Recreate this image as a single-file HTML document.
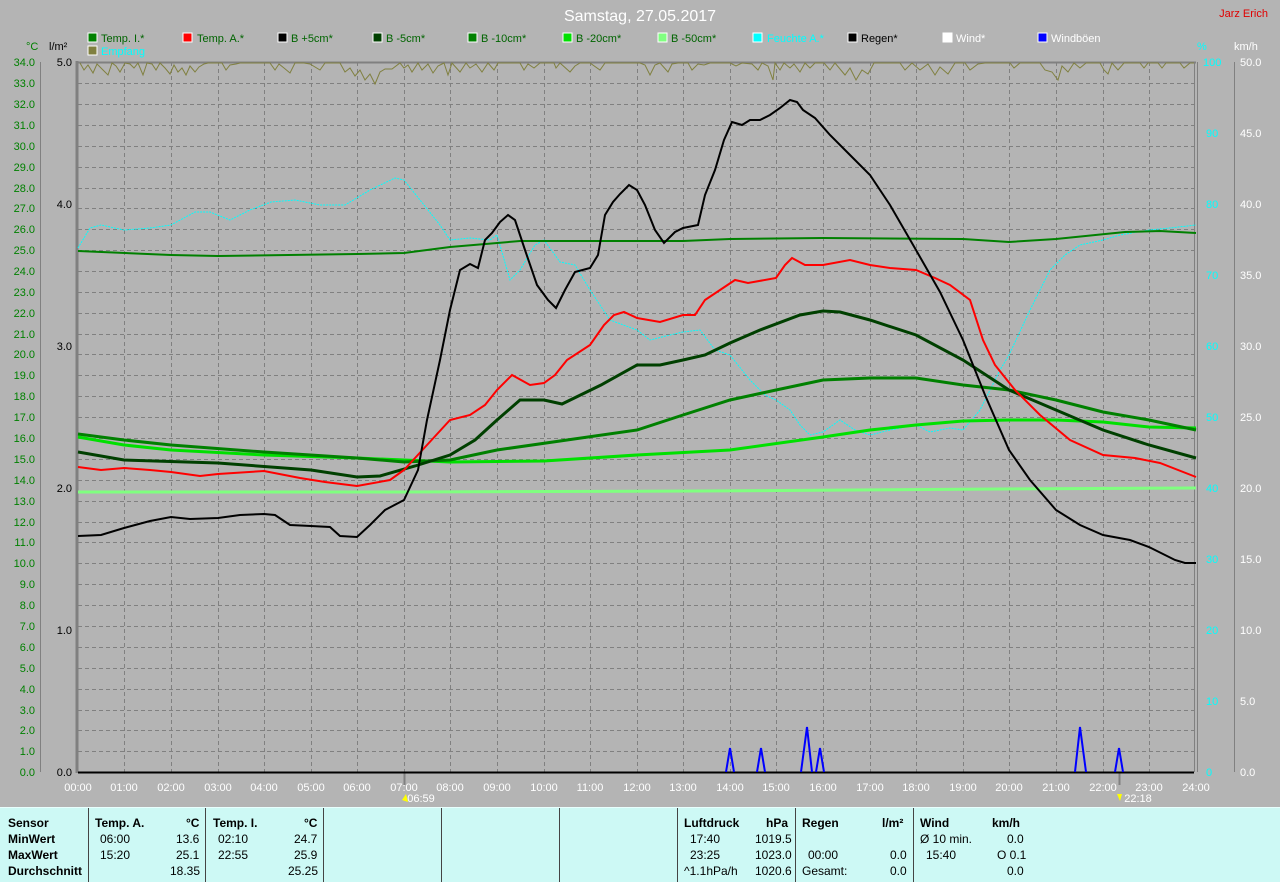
<!DOCTYPE html>
<html><head><meta charset="utf-8"><style>
body{margin:0;width:1280px;height:881px;background:#b4b4b4;overflow:hidden;font-family:"Liberation Sans",sans-serif}
svg{position:absolute;left:0;top:0}
.tbl{position:absolute;left:0;top:807px;width:1280px;height:74px;background:#cdf9f5;border-top:1px solid #e8fffd}
.tbl div{position:absolute;font-size:12px;color:#000}
.b{font-weight:bold}
.sep{position:absolute;top:0;width:1px;height:74px;background:#444}
</style></head><body>
<svg width="1280" height="807" font-family="Liberation Sans, sans-serif">
<text x="640" y="21" fill="#fff" font-size="16" text-anchor="middle">Samstag, 27.05.2017</text>
<text x="1268" y="17" fill="#e00000" font-size="11" text-anchor="end">Jarz Erich</text>
<g font-size="11">
<rect x="88" y="33" width="9" height="9" fill="#008000" stroke="#fff"/><text x="101" y="42" fill="#006400">Temp. I.*</text>
<rect x="183" y="33" width="9" height="9" fill="#f00" stroke="#fff"/><text x="197" y="42" fill="#006400">Temp. A.*</text>
<rect x="278" y="33" width="9" height="9" fill="#000" stroke="#fff"/><text x="291" y="42" fill="#006400">B +5cm*</text>
<rect x="373" y="33" width="9" height="9" fill="#004000" stroke="#fff"/><text x="386" y="42" fill="#006400">B -5cm*</text>
<rect x="468" y="33" width="9" height="9" fill="#008000" stroke="#fff"/><text x="481" y="42" fill="#006400">B -10cm*</text>
<rect x="563" y="33" width="9" height="9" fill="#00e000" stroke="#fff"/><text x="576" y="42" fill="#006400">B -20cm*</text>
<rect x="658" y="33" width="9" height="9" fill="#80ff80" stroke="#fff"/><text x="671" y="42" fill="#006400">B -50cm*</text>
<rect x="753" y="33" width="9" height="9" fill="#0ff" stroke="#fff"/><text x="767" y="42" fill="#0ff">Feuchte A.*</text>
<rect x="848" y="33" width="9" height="9" fill="#000" stroke="#fff"/><text x="861" y="42" fill="#000">Regen*</text>
<rect x="943" y="33" width="9" height="9" fill="#fff" stroke="#fff"/><text x="956" y="42" fill="#fff">Wind*</text>
<rect x="1038" y="33" width="9" height="9" fill="#00f" stroke="#fff"/><text x="1051" y="42" fill="#fff">Windböen</text>
<rect x="88" y="46" width="9" height="9" fill="#808040" stroke="#fff"/><text x="101" y="55" fill="#0ff">Empfang</text>
<text x="26" y="50" fill="#008000">°C</text><text x="49" y="50" fill="#000">l/m²</text>
<text x="1197" y="50" fill="#0ff">%</text><text x="1234" y="50" fill="#fff">km/h</text>
</g>
<!-- grid -->
<g stroke="#808080" stroke-dasharray="4,3" stroke-width="1">
<path d="M78 83.5H1194M78 104.5H1194M78 125.5H1194M78 146.5H1194M78 167.5H1194M78 188.5H1194M78 208.5H1194M78 229.5H1194M78 250.5H1194M78 271.5H1194M78 292.5H1194M78 313.5H1194M78 334.5H1194M78 354.5H1194M78 375.5H1194M78 396.5H1194M78 417.5H1194M78 438.5H1194M78 459.5H1194M78 480.5H1194M78 501.5H1194M78 522.5H1194M78 542.5H1194M78 563.5H1194M78 584.5H1194M78 605.5H1194M78 626.5H1194M78 647.5H1194M78 668.5H1194M78 689.5H1194M78 710.5H1194M78 730.5H1194M78 751.5H1194"/>
<path d="M124.5 62V772M171.5 62V772M218.5 62V772M264.5 62V772M311.5 62V772M357.5 62V772M404.5 62V772M450.5 62V772M497.5 62V772M544.5 62V772M590.5 62V772M637.5 62V772M683.5 62V772M730.5 62V772M776.5 62V772M823.5 62V772M870.5 62V772M916.5 62V772M963.5 62V772M1009.5 62V772M1056.5 62V772M1103.5 62V772M1149.5 62V772"/>
</g>
<g stroke="#808080" fill="none">
<path d="M40.5 62V772M1234.5 62V772"/>
<path d="M77 61V773" stroke-width="3"/>
<path d="M1194.5 62V772M1197.5 62V772" stroke-width="1"/>
<path d="M77 62.5H1196" stroke-width="2"/>
<path d="M404.5 772V785M1119.5 772V785" stroke-width="2"/>
</g>
<path d="M78 772.5H1194" stroke="#000" stroke-width="2"/>
<!-- left axis labels -->
<g font-size="11" fill="#008000" text-anchor="end">
<text x="35" y="66">34.0</text><text x="35" y="87">33.0</text><text x="35" y="108">32.0</text><text x="35" y="129">31.0</text><text x="35" y="150">30.0</text><text x="35" y="171">29.0</text><text x="35" y="192">28.0</text><text x="35" y="212">27.0</text><text x="35" y="233">26.0</text><text x="35" y="254">25.0</text><text x="35" y="275">24.0</text><text x="35" y="296">23.0</text><text x="35" y="317">22.0</text><text x="35" y="338">21.0</text><text x="35" y="358">20.0</text><text x="35" y="379">19.0</text><text x="35" y="400">18.0</text><text x="35" y="421">17.0</text><text x="35" y="442">16.0</text><text x="35" y="463">15.0</text><text x="35" y="484">14.0</text><text x="35" y="505">13.0</text><text x="35" y="526">12.0</text><text x="35" y="546">11.0</text><text x="35" y="567">10.0</text><text x="35" y="588">9.0</text><text x="35" y="609">8.0</text><text x="35" y="630">7.0</text><text x="35" y="651">6.0</text><text x="35" y="672">5.0</text><text x="35" y="693">4.0</text><text x="35" y="714">3.0</text><text x="35" y="734">2.0</text><text x="35" y="755">1.0</text><text x="35" y="776">0.0</text>
</g>
<g font-size="11" fill="#000" text-anchor="end">
<text x="72" y="66">5.0</text><text x="72" y="208">4.0</text><text x="72" y="350">3.0</text><text x="72" y="492">2.0</text><text x="72" y="634">1.0</text><text x="72" y="776">0.0</text>
</g>
<g font-size="11" fill="#0ff">
<text x="1203" y="66">100</text><text x="1206" y="137">90</text><text x="1206" y="208">80</text><text x="1206" y="279">70</text><text x="1206" y="350">60</text><text x="1206" y="421">50</text><text x="1206" y="492">40</text><text x="1206" y="563">30</text><text x="1206" y="634">20</text><text x="1206" y="705">10</text><text x="1206" y="776">0</text>
</g>
<g font-size="11" fill="#fff">
<text x="1240" y="66">50.0</text><text x="1240" y="137">45.0</text><text x="1240" y="208">40.0</text><text x="1240" y="279">35.0</text><text x="1240" y="350">30.0</text><text x="1240" y="421">25.0</text><text x="1240" y="492">20.0</text><text x="1240" y="563">15.0</text><text x="1240" y="634">10.0</text><text x="1240" y="705">5.0</text><text x="1240" y="776">0.0</text>
</g>
<g font-size="11" fill="#fff" text-anchor="middle">
<text x="78" y="791">00:00</text><text x="124" y="791">01:00</text><text x="171" y="791">02:00</text><text x="218" y="791">03:00</text><text x="264" y="791">04:00</text><text x="311" y="791">05:00</text><text x="357" y="791">06:00</text><text x="404" y="791">07:00</text><text x="450" y="791">08:00</text><text x="497" y="791">09:00</text><text x="544" y="791">10:00</text><text x="590" y="791">11:00</text><text x="637" y="791">12:00</text><text x="683" y="791">13:00</text><text x="730" y="791">14:00</text><text x="776" y="791">15:00</text><text x="823" y="791">16:00</text><text x="870" y="791">17:00</text><text x="916" y="791">18:00</text><text x="963" y="791">19:00</text><text x="1009" y="791">20:00</text><text x="1056" y="791">21:00</text><text x="1103" y="791">22:00</text><text x="1149" y="791">23:00</text><text x="1196" y="791">24:00</text>
<text x="421" y="802">06:59</text><text x="1138" y="802">22:18</text>
</g>
<path d="M402 800l4-6 2 8z" fill="#ff0"/><path d="M1117 794l5 0-2 7z" fill="#ff0"/>
<!-- empfang -->
<polyline fill="none" stroke="#808040" stroke-width="1" points="80,63 84,70 88,65 93,73 97,64 103,70 108,75 112,63 116,66 120,72 125,63 130,64 134,68 138,63 143,75 147,63 152,64 156,70 160,63 165,68 170,74 174,65 178,72 182,68 186,75 190,66 195,72 199,67 204,64 208,63 222,63 226,70 230,65 236,64 240,63 270,63 275,70 279,64 284,68 290,73 295,63 304,63 310,64 320,70 325,63 340,63 345,72 350,68 355,76 360,70 365,80 370,74 375,84 380,72 385,69 392,69 400,63 404,68 408,65 412,72 418,63 422,70 428,64 433,73 438,66 444,63 448,75 452,63 460,72 466,63 470,68 476,64 482,72 488,63 494,70 498,63 520,63 524,70 528,64 534,68 540,63 554,63 556,68 560,63 570,72 575,66 580,63 590,63 600,70 605,63 640,63 645,65 650,75 655,65 660,63 668,72 672,64 678,63 688,63 692,70 698,64 704,65 710,63 730,63 736,66 742,63 752,64 758,70 762,63 768,66 773,80 775,63 780,70 784,63 790,68 794,64 800,72 805,63 810,68 815,63 824,63 830,70 835,63 845,75 850,68 856,80 862,70 868,74 874,63 900,63 905,70 912,63 920,70 928,64 935,75 940,67 948,74 955,63 965,63 970,70 978,64 985,63 1010,63 1014,68 1020,63 1040,63 1045,70 1052,72 1058,80 1062,66 1068,72 1074,63 1080,68 1086,63 1100,63 1104,70 1108,74 1112,63 1118,70 1124,63 1140,63 1144,68 1148,63 1158,63 1162,68 1166,63 1180,63 1184,68 1190,63 1194,63"/>
<!-- humidity -->
<polyline fill="none" stroke="#00ffff" stroke-width="1" stroke-dasharray="2,1" points="78,248 90,228 101,225 124,230 150,228 171,225 195,212 210,212 230,220 250,210 271,202 295,200 320,205 345,205 370,190 395,178 404,180 420,200 440,225 450,240 470,238 490,240 497,235 510,280 520,270 535,245 544,240 560,262 575,265 590,290 610,320 637,330 650,340 670,335 683,332 700,330 715,350 730,355 750,380 765,395 776,400 790,410 800,425 810,435 823,432 840,420 855,430 870,435 890,430 916,425 930,432 950,428 963,430 980,410 1000,370 1009,355 1030,310 1050,270 1065,255 1080,245 1103,240 1120,235 1149,230 1170,228 1196,225"/>
<!-- B-50 -->
<polyline fill="none" stroke="#80ff80" stroke-width="3" points="78,492 400,492 700,491 1000,489 1196,488"/>
<!-- B-20 -->
<polyline fill="none" stroke="#00e000" stroke-width="3" points="78,437 124,445 171,450 264,455 357,458 404,460 450,462 544,461 637,455 730,450 823,437 870,430 916,425 963,421 1009,420 1056,420 1103,422 1149,427 1196,428"/>
<!-- B-10 -->
<polyline fill="none" stroke="#008000" stroke-width="3" points="78,434 124,440 171,445 264,452 357,458 404,462 450,460 497,450 567,440 637,430 683,415 730,400 776,390 823,380 870,378 916,378 963,385 1009,390 1056,400 1103,412 1149,420 1196,430"/>
<!-- B-5 -->
<polyline fill="none" stroke="#004000" stroke-width="3" points="78,452 124,460 218,463 311,470 357,477 380,476 415,466 450,455 475,440 497,420 520,400 544,400 562,404 601,385 637,365 660,365 683,360 705,355 730,343 760,330 800,315 823,311 840,312 870,320 916,335 963,360 1009,390 1056,410 1103,430 1149,445 1196,458"/>
<!-- Temp I -->
<polyline fill="none" stroke="#008000" stroke-width="2" points="78,251 171,255 218,256 357,254 404,253 450,247 520,241 683,241 730,239 823,238 963,239 1009,242 1056,239 1125,232 1160,231 1196,233"/>
<!-- Temp A -->
<polyline fill="none" stroke="#f00" stroke-width="2" points="78,467 101,470 124,468 150,470 171,472 200,476 218,474 264,471 300,478 325,482 357,486 390,480 404,470 427,445 450,420 470,415 485,405 497,390 512,375 530,385 544,383 555,375 567,360 590,345 604,325 614,315 624,312 637,318 660,322 683,315 695,315 705,300 720,290 735,280 748,283 776,278 785,265 792,258 805,265 823,265 850,260 870,265 890,268 916,270 935,278 950,285 970,300 983,340 995,365 1015,390 1040,415 1070,440 1103,455 1135,458 1160,463 1196,477"/>
<!-- B+5 -->
<polyline fill="none" stroke="#000" stroke-width="2" points="78,536 101,535 124,528 150,521 171,517 190,519 218,518 240,515 264,514 275,515 290,525 311,526 330,527 340,536 357,537 370,525 385,510 404,500 418,470 427,420 440,360 450,310 460,270 470,264 478,268 485,240 492,233 500,222 508,215 515,220 525,250 537,285 548,300 556,308 565,290 575,272 590,268 598,255 605,215 613,202 620,194 629,185 637,190 645,205 655,230 664,243 675,232 683,228 698,225 705,195 715,170 724,140 732,122 742,125 750,120 760,120 770,115 780,108 790,100 797,102 803,110 815,118 830,135 850,155 870,175 890,205 916,250 940,292 963,340 985,395 1009,450 1030,480 1056,510 1080,525 1103,535 1130,540 1149,547 1175,560 1185,563 1196,563"/>
<!-- gusts -->
<g fill="none" stroke="#0000ff" stroke-width="2">
<path d="M726 772L730 748 734 772"/><path d="M757 772L761 748 765 772"/><path d="M801 772L807 727 812 772"/><path d="M816 772L820 748 824 772"/><path d="M1075 772L1080 727 1086 772"/><path d="M1115 772L1119 748 1123 772"/>
</g>
</svg>
<div class="tbl">
<span class="sep" style="left:88px"></span><span class="sep" style="left:205px"></span><span class="sep" style="left:323px"></span><span class="sep" style="left:441px"></span><span class="sep" style="left:559px"></span><span class="sep" style="left:677px"></span><span class="sep" style="left:795px"></span><span class="sep" style="left:913px"></span>
<div class="b" style="left:8px;top:8px">Sensor</div><div class="b" style="left:8px;top:24px">MinWert</div><div class="b" style="left:8px;top:40px">MaxWert</div><div class="b" style="left:8px;top:56px">Durchschnitt</div>
<div class="b" style="left:95px;top:8px">Temp. A.</div><div class="b" style="left:186px;top:8px">°C</div>
<div style="left:100px;top:24px">06:00</div><div style="left:176px;top:24px">13.6</div>
<div style="left:100px;top:40px">15:20</div><div style="left:176px;top:40px">25.1</div>
<div style="left:170px;top:56px">18.35</div>
<div class="b" style="left:213px;top:8px">Temp. I.</div><div class="b" style="left:304px;top:8px">°C</div>
<div style="left:218px;top:24px">02:10</div><div style="left:294px;top:24px">24.7</div>
<div style="left:218px;top:40px">22:55</div><div style="left:294px;top:40px">25.9</div>
<div style="left:288px;top:56px">25.25</div>
<div class="b" style="left:684px;top:8px">Luftdruck</div><div class="b" style="left:766px;top:8px">hPa</div>
<div style="left:690px;top:24px">17:40</div><div style="left:755px;top:24px">1019.5</div>
<div style="left:690px;top:40px">23:25</div><div style="left:755px;top:40px">1023.0</div>
<div style="left:684px;top:56px">^1.1hPa/h</div><div style="left:755px;top:56px">1020.6</div>
<div class="b" style="left:802px;top:8px">Regen</div><div class="b" style="left:882px;top:8px">l/m²</div>
<div style="left:808px;top:40px">00:00</div><div style="left:890px;top:40px">0.0</div>
<div style="left:802px;top:56px">Gesamt:</div><div style="left:890px;top:56px">0.0</div>
<div class="b" style="left:920px;top:8px">Wind</div><div class="b" style="left:992px;top:8px">km/h</div>
<div style="left:920px;top:24px">Ø 10 min.</div><div style="left:1007px;top:24px">0.0</div>
<div style="left:926px;top:40px">15:40</div><div style="left:997px;top:40px">O 0.1</div>
<div style="left:1007px;top:56px">0.0</div>
</div>
</body></html>
